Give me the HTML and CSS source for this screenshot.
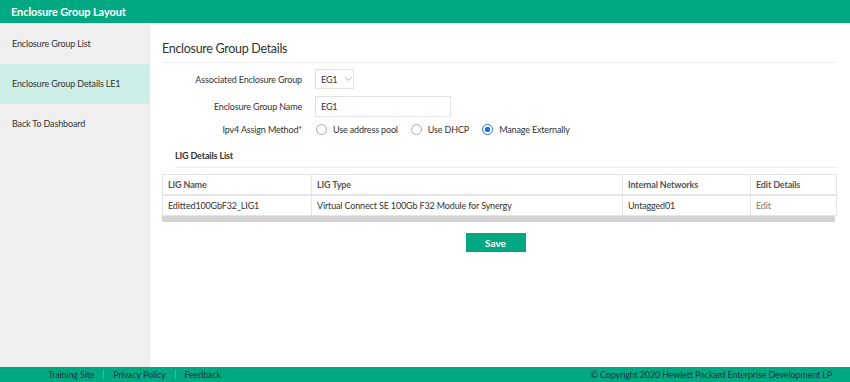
FILE: index.html
```html
<!DOCTYPE html>
<html>
<head>
    <meta charset="utf-8">
    <title>Enclosure Group Layout</title>
    <link rel="stylesheet" href="styles.css">
</head>
<body>
    <header class="topbar">Enclosure Group Layout</header>
    <div class="page">
        <nav class="sidebar">
            <a class="side-link">Enclosure Group List</a>
            <a class="side-link active">Enclosure Group Details LE1</a>
            <a class="side-link">Back To Dashboard</a>
        </nav>
        <main class="content">
            <h2 class="title">Enclosure Group Details</h2>
            <div class="form">
                <div class="row">
                    <label class="lbl">Associated Enclosure Group</label>
                    <div class="select">EG1
                        <svg width="7" height="4" viewBox="0 0 7 4"><path d="M0.5 0.5 L3.5 3.5 L6.5 0.5" fill="none" stroke="#b0b0b0" stroke-width="1"/></svg>
                    </div>
                </div>
                <div class="row">
                    <label class="lbl">Enclosure Group Name</label>
                    <div class="textbox">EG1</div>
                </div>
                <div class="row radios">
                    <label class="lbl">Ipv4 Assign Method*</label>
                    <span class="radio"></span><span class="opt">Use address pool</span>
                    <span class="radio"></span><span class="opt">Use DHCP</span>
                    <span class="radio checked"></span><span class="opt">Manage Externally</span>
                </div>
            </div>
            <h4 class="subtitle">LIG Details List</h4>
            <div class="table-wrap">
                <table class="lig">
                    <thead>
                        <tr>
                            <th class="c1">LIG Name</th>
                            <th class="c2">LIG Type</th>
                            <th class="c3">Internal Networks</th>
                            <th class="c4">Edit Details</th>
                        </tr>
                    </thead>
                    <tbody>
                        <tr>
                            <td>Editted100GbF32_LIG1</td>
                            <td>Virtual Connect SE 100Gb F32 Module for Synergy</td>
                            <td>Untagged01</td>
                            <td class="edit">Edit</td>
                        </tr>
                    </tbody>
                </table>
                <div class="scrollbar"></div>
            </div>
            <div class="actions">
                <button class="save">Save</button>
            </div>
        </main>
    </div>
    <footer class="footer">
        <div class="links">
            <a>Training Site</a><span class="sep"></span><a>Privacy Policy</a><span class="sep"></span><a>Feedback</a>
        </div>
        <div class="copy">&copy; Copyright 2020 Hewlett Packard Enterprise Development LP</div>
    </footer>
</body>
</html>
```

FILE: styles.css
```css
html, body {
    margin: 0;
    height: 100%;
}
body {
    display: flex;
    flex-direction: column;
    font-family: Lato, "Noto Sans", sans-serif;
    font-size: 9px;
    letter-spacing: -0.15px;
    color: #333;
    background: #fff;
}
.topbar {
    height: 23px;
    line-height: 24px;
    padding-left: 11px;
    background-color: #01a982;
    color: #fff;
    font-weight: 700;
    font-size: 11px;
    letter-spacing: -0.1px;
}
.page {
    flex: 1;
    display: flex;
    min-height: 0;
}
.sidebar {
    width: 150px;
    background-color: #efefef;
    display: flex;
    flex-direction: column;
    padding-top: 1px;
}
.side-link {
    display: block;
    height: 40px;
    line-height: 40px;
    padding-left: 12px;
    color: #333;
}
.side-link.active {
    background-color: #cdeee6;
}
.content {
    flex: 1;
    padding: 0 13px 0 12px;
}
.title {
    margin: 18px 0 0;
    padding-bottom: 6px;
    font-size: 12.5px;
    letter-spacing: -0.3px;
    font-weight: 400;
    color: #333;
    border-bottom: 1px solid #eee;
}
.form {
    padding-top: 6px;
}
.row {
    display: flex;
    align-items: center;
    margin-bottom: 7px;
}
.lbl {
    width: 140px;
    text-align: right;
    margin-right: 13px;
}
.select {
    height: 20px;
    width: 39px;
    border: 1px solid #e2e2e2;
    box-sizing: border-box;
    display: flex;
    align-items: center;
    padding-left: 5px;
    gap: 8px;
}
.textbox {
    height: 21px;
    width: 136px;
    border: 1px solid #e2e2e2;
    box-sizing: border-box;
    padding-left: 5px;
    display: flex;
    align-items: center;
}
.radios {
    height: 11px;
}
.radio {
    width: 11px;
    height: 11px;
    border: 1px solid #a9a9a9;
    border-radius: 50%;
    box-sizing: border-box;
    margin: 0 6px 0 1px;
}
.radio.checked {
    border-color: #1a73e8;
    background: radial-gradient(circle, #1a73e8 0 2.5px, #fff 3px);
}
.opt {
    margin-right: 12px;
}
.subtitle {
    margin: 15px 0 0 13px;
    padding-bottom: 6px;
    font-size: 9px;
    font-weight: 700;
    color: #333;
    border-bottom: 1px solid #eee;
}
.table-wrap {
    margin-top: 6px;
    width: 675px;
}
.lig {
    width: 100%;
    border-collapse: collapse;
    border: 1px solid #e4e4e4;
}
.lig th, .lig td {
    border-left: 1px solid #e4e4e4;
    text-align: left;
    padding: 0 5px;
    height: 19px;
}
.lig th {
    font-weight: 700;
    color: #555;
    border-bottom: 2px solid #e4e4e4;
}
.c1 { width: 138px; }
.c2 { width: 300px; }
.c3 { width: 117px; }
.edit { color: #777; }
.scrollbar {
    height: 6px;
    width: 673px;
    background-color: #d3d3d3;
}
.actions {
    display: flex;
    justify-content: center;
    margin-top: 11px;
}
.save {
    width: 60px;
    height: 19px;
    border: none;
    background-color: #01a982;
    color: #fff;
    font-family: Lato, sans-serif;
    font-weight: 700;
    font-size: 10px;
    margin-right: 8px;
}
.footer {
    height: 15px;
    background-color: #01a982;
    display: flex;
    align-items: center;
    justify-content: space-between;
    color: #263040;
    font-size: 9px;
}
.links {
    display: flex;
    align-items: center;
    padding-left: 48px;
}
.sep {
    width: 1px;
    height: 9px;
    background-color: #2fc19c;
    margin: 0 9px;
}
.copy {
    padding-right: 18px;
}
```
